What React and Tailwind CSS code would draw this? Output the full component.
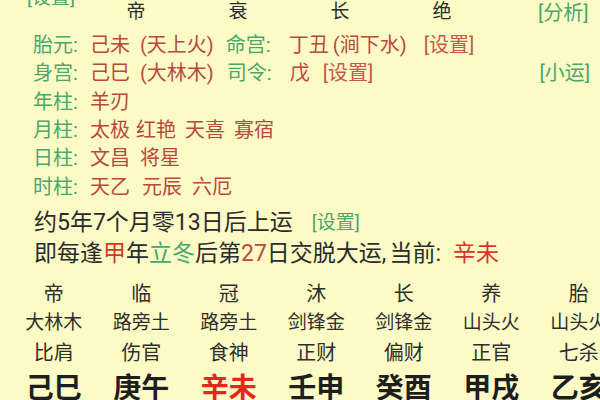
import React from "react";

const G = "text-[#4ba66c]";
const R = "text-[#b8493c]";
const RB = "text-[#c35a4c]";

const cols = [
  { a: "帝", b: "大林木", c: "比肩", d: "己巳", red: false },
  { a: "临", b: "路旁土", c: "伤官", d: "庚午", red: false },
  { a: "冠", b: "路旁土", c: "食神", d: "辛未", red: true },
  { a: "沐", b: "剑锋金", c: "正财", d: "壬申", red: false },
  { a: "长", b: "剑锋金", c: "偏财", d: "癸酉", red: false },
  { a: "养", b: "山头火", c: "正官", d: "甲戌", red: false },
  { a: "胎", b: "山头火", c: "七杀", d: "乙亥", red: false },
];

function Row({ label, children, right }) {
  return (
    <div className="flex items-center whitespace-pre h-[28.3px]">
      <span className={`w-[57px] ${G}`}>{label}:</span>
      {children}
      {right && <span className={`ml-auto mr-[10px] ${G}`}>{right}</span>}
    </div>
  );
}

export default function App() {
  return (
    <div className="w-[600px] h-[400px] overflow-hidden bg-[#fcfbc6] font-['Roboto','Noto_Sans_CJK_SC',sans-serif] text-[#2b2b2b]">
      {/* header */}
      <div className="flex items-start h-[31px] text-[19px] leading-[20px]">
        <div className={`w-[85px] pl-[27px] -mt-[12px] text-[19px] ${G}`}>[设置]</div>
        <div className="w-[102px] text-center mt-[2px]">帝</div>
        <div className="w-[102px] text-center mt-[2px]">衰</div>
        <div className="w-[102px] text-center mt-[2px]">长</div>
        <div className="w-[102px] text-center mt-[2px]">绝</div>
        <div className={`ml-[45px] mt-[1px] text-[20px] leading-[24px] ${G}`}>[分析]</div>
      </div>

      <div className="pl-[33px] text-[20px] leading-[24px]">
        <Row label="胎元">
          <span className={R}>己未</span>
          <span className={`ml-[10px] ${R}`}>(天上火)</span>
          <span className={`ml-[12px] w-[63px] ${G}`}>命宫:</span>
          <span className={R}>丁丑</span>
          <span className={`ml-[4px] ${R}`}>(涧下水)</span>
          <span className={`ml-[17px] ${RB}`}>[设置]</span>
        </Row>
        <Row label="身宫" right="[小运]">
          <span className={R}>己巳</span>
          <span className={`ml-[10px] ${R}`}>(大林木)</span>
          <span className={`ml-[13px] w-[63px] ${G}`}>司令:</span>
          <span className={R}>戊</span>
          <span className={`ml-[13px] ${RB}`}>[设置]</span>
        </Row>
        <Row label="年柱">
          <span className={R}>羊刃</span>
        </Row>
        <Row label="月柱">
          <span className={R}>太极</span>
          <span className={`ml-[6px] ${R}`}>红艳</span>
          <span className={`ml-[9px] ${R}`}>天喜</span>
          <span className={`ml-[9px] ${R}`}>寡宿</span>
        </Row>
        <Row label="日柱">
          <span className={R}>文昌</span>
          <span className={`ml-[10px] ${R}`}>将星</span>
        </Row>
        <Row label="时柱">
          <span className={R}>天乙</span>
          <span className={`ml-[12px] ${R}`}>元辰</span>
          <span className={`ml-[10px] ${R}`}>六厄</span>
        </Row>
      </div>

      <div className="pl-[34px] text-[23px] leading-[31px] mt-[6px] whitespace-pre">
        <div className="flex items-center h-[31px]">
          <span>约5年7个月零13日后上运</span>
          <span className={`ml-[19px] text-[19px] ${G}`}>[设置]</span>
        </div>
        <div className="flex items-center h-[31px]">
          <span>即每逢</span>
          <span className="text-[#d9362a]">甲</span>
          <span>年</span>
          <span className={G}>立冬</span>
          <span>后第</span>
          <span className={R}>27</span>
          <span>日交脱大运,</span>
          <span className="ml-[3px]">当前:</span>
          <span className="ml-[12px] text-[#d9362a]">辛未</span>
        </div>
      </div>

      <div className="flex pl-[10px] mt-[12px]">
        {cols.map((c, i) => (
          <div key={i} className="w-[87.5px] shrink-0 flex flex-col items-center text-[#2e2e2e]">
            <div className="text-[20px] leading-[27px] h-[27px]">{c.a}</div>
            <div className="text-[19px] leading-[30px] h-[30px]">{c.b}</div>
            <div className="text-[20px] leading-[30px] h-[30px]">{c.c}</div>
            <div
              className={`text-[28px] leading-[42px] font-bold ${c.red ? "text-[#e2281c]" : "text-[#1e1e1e]"}`}
            >
              {c.d}
            </div>
          </div>
        ))}
      </div>
    </div>
  );
}
